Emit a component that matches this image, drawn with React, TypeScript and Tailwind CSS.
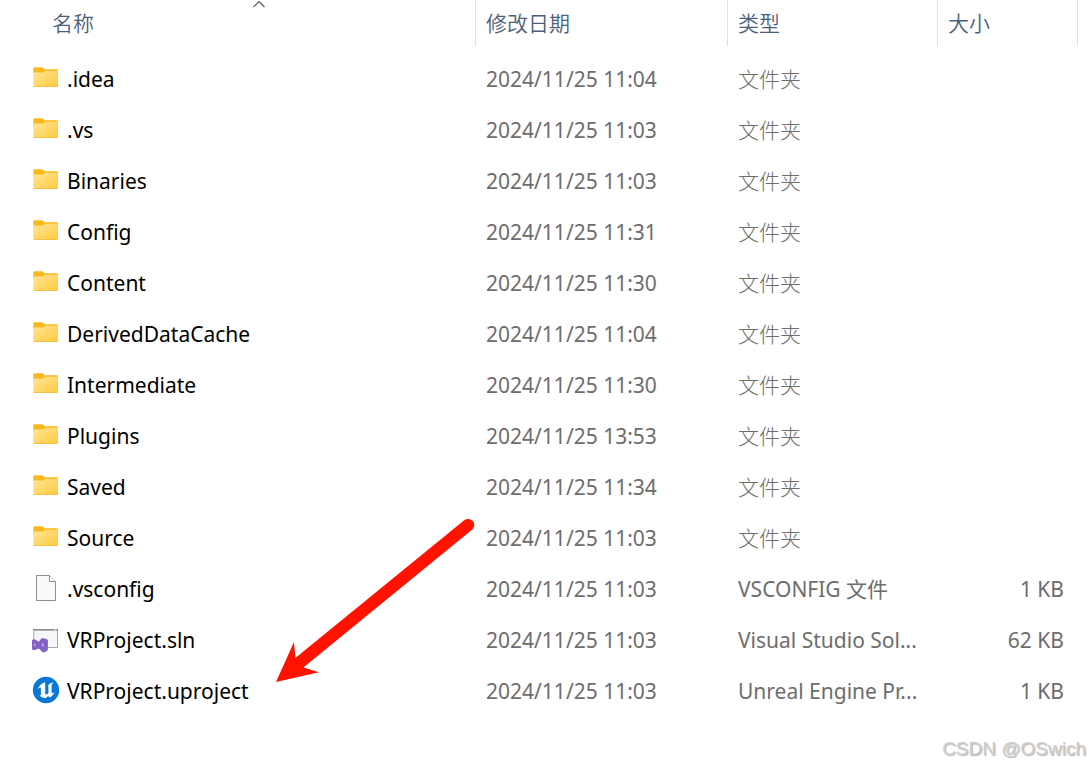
import type { ReactNode } from "react";

type Kind = "folder" | "file" | "solution" | "unreal";

interface Entry {
  name: string;
  modified: string;
  type: string;
  size?: string;
  kind: Kind;
}

const entries: Entry[] = [
  { name: ".idea", modified: "2024/11/25 11:04", type: "文件夹", kind: "folder" },
  { name: ".vs", modified: "2024/11/25 11:03", type: "文件夹", kind: "folder" },
  { name: "Binaries", modified: "2024/11/25 11:03", type: "文件夹", kind: "folder" },
  { name: "Config", modified: "2024/11/25 11:31", type: "文件夹", kind: "folder" },
  { name: "Content", modified: "2024/11/25 11:30", type: "文件夹", kind: "folder" },
  { name: "DerivedDataCache", modified: "2024/11/25 11:04", type: "文件夹", kind: "folder" },
  { name: "Intermediate", modified: "2024/11/25 11:30", type: "文件夹", kind: "folder" },
  { name: "Plugins", modified: "2024/11/25 13:53", type: "文件夹", kind: "folder" },
  { name: "Saved", modified: "2024/11/25 11:34", type: "文件夹", kind: "folder" },
  { name: "Source", modified: "2024/11/25 11:03", type: "文件夹", kind: "folder" },
  { name: ".vsconfig", modified: "2024/11/25 11:03", type: "VSCONFIG 文件", size: "1 KB", kind: "file" },
  { name: "VRProject.sln", modified: "2024/11/25 11:03", type: "Visual Studio Sol...", size: "62 KB", kind: "solution" },
  { name: "VRProject.uproject", modified: "2024/11/25 11:03", type: "Unreal Engine Pr...", size: "1 KB", kind: "unreal" },
];

function FolderIcon() {
  return (
    <svg viewBox="0 1 28 28" className="size-7 overflow-visible" aria-hidden="true">
      <defs>
        <linearGradient id="folder-front" x1="0" y1="0" x2="1" y2="1">
          <stop offset="0" stopColor="#ffe69b" />
          <stop offset="1" stopColor="#ffca3a" />
        </linearGradient>
      </defs>
      <path d="M1.3 4.8c0-.9.5-1.5 1.4-1.5h7.2c.6 0 1 .2 1.4.6l1.3 1.4h12c.8 0 1.4.4 1.4 1.2v5H1.3z" fill="#f9b91c" />
      <path d="M1.3 8.6h9.2c.6 0 1-.2 1.4-.6l1.3-1.3H26v15.1c0 .7-.4 1.1-1.1 1.1H2.4c-.7 0-1.1-.4-1.1-1.1z" fill="url(#folder-front)" />
      <path d="M1.8 22.5h23.7" stroke="#efbd3c" strokeWidth=".8" />
    </svg>
  );
}

function FileIcon() {
  return (
    <svg viewBox="0 1 28 28" className="size-7 overflow-visible" aria-hidden="true">
      <path d="M4.5 1.5h13l6 6v19h-19z" fill="#f9f9f9" stroke="#8e8e8e" />
      <path d="M17.5 1.5v6h6" fill="#fff" stroke="#8e8e8e" />
    </svg>
  );
}

function SolutionIcon() {
  return (
    <svg viewBox="0 1 28 28" className="size-7 overflow-visible" aria-hidden="true">
      <rect x="1.8" y="4.5" width="23.7" height="18" fill="#f6f6f6" stroke="#a5a9ad" />
      <path d="M1.3 4.8h24.7" stroke="#858b92" strokeWidth="1.6" />
      <path d="M22.2 4.8h1.5" stroke="#fff" strokeWidth="1" />
      <path
        d="M0 15.6C0 14.8 2.2 14 3 14.4L6.8 16.8 9.4 13.4C9.8 12.9 15.9 13.8 15.9 15.2V24.8C15.9 26 12 27.8 11 27.4L6.8 23.4 3 25C2.2 25.4 0 24.8 0 24z"
        fill="#8661c5"
      />
      <path d="M2.2 18.5 3.8 20 2.2 21.5zM9.4 20 11.4 18V22z" fill="#d9cdee" />
    </svg>
  );
}

function UnrealIcon() {
  return (
    <svg viewBox="0 1 28 28" className="size-7 overflow-visible" aria-hidden="true">
      <circle cx="14" cy="14" r="13.2" fill="#0878d7" />
      <path
        d="M13.2 6.2C9.4 7.2 6.7 9.9 5.7 13.5c.9-1.3 1.7-2 2.4-2 .5 0 .8.3.8.9v6.2c0 .6-.3.9-1.2.9 1.4 1.8 3.7 2.6 6.3 2.6l2-2 1.8 1.4c2.4-1.2 4.1-3.2 4.8-5.7-1 1.1-1.7 1.5-2.3 1.5-.5 0-.7-.3-.7-.8v-6c0-1.7.7-3 2-4.3-2.3.5-4.1 1.4-5.4 2.8h-.7c.6 0 .9.4.9 1.1v7c-.5.9-1.2 1.4-1.9 1.4-.9 0-1.3-.5-1.3-1.3V9c0-1.2-.1-1.9 0-2.8z"
        fill="#fff"
      />
    </svg>
  );
}

const icons: Record<Kind, ReactNode> = {
  folder: <FolderIcon />,
  file: <FileIcon />,
  solution: <SolutionIcon />,
  unreal: <UnrealIcon />,
};

function HeaderCell({ label, sorted = false }: { label: string; sorted?: boolean }) {
  return (
    <th scope="col" aria-sort={sorted ? "ascending" : undefined} className="relative border-r border-[#e2e2e2] p-0 font-[350]">
      <button type="button" className={sorted ? "block w-full pl-[52px] text-left" : "block w-full pl-[10px] text-left"}>
        {label}
      </button>
      {sorted && (
        <svg viewBox="0 0 14 8" className="absolute top-0 left-[252px] h-2 w-[14px]" aria-hidden="true">
          <path d="M1.5 7 7 1.5 12.5 7" fill="none" stroke="#555" strokeWidth="1.1" />
        </svg>
      )}
    </th>
  );
}

function PointerArrow() {
  return (
    <svg viewBox="0 0 200 166" className="pointer-events-none absolute top-[518px] left-[275px] h-[166px] w-[200px]" aria-hidden="true">
      <path d="M189.2 2.3A6 6 0 0 1 197 11.7L28.4 149.4 44 154.2 1 164 19 124 20.4 140z" fill="#ff1200" />
    </svg>
  );
}

export default function App() {
  return (
    <main className="relative min-h-screen bg-white font-['Noto_Sans','Noto_Sans_CJK_SC',sans-serif] text-[21px] leading-[30px] text-[#6d6d6d]">
      <table className="w-full table-fixed border-separate border-spacing-0 text-left whitespace-nowrap">
        <colgroup>
          <col />
          <col className="w-[252px]" />
          <col className="w-[210px]" />
          <col className="w-[140px]" />
          <col className="w-3" />
        </colgroup>
        <thead className="text-[#4c607a]">
          <tr className="h-[46px]">
            <HeaderCell label="名称" sorted />
            <HeaderCell label="修改日期" />
            <HeaderCell label="类型" />
            <HeaderCell label="大小" />
            <td />
          </tr>
        </thead>
        <tbody>
          <tr className="h-[7px]" aria-hidden="true">
            <td colSpan={5} className="p-0" />
          </tr>
          {entries.map((entry) => (
            <tr key={entry.name} className="h-[51px]">
              <td className="p-0 pl-8 text-black">
                <div className="flex items-center gap-[7px]">
                  {icons[entry.kind]}
                  <span>{entry.name}</span>
                </div>
              </td>
              <td className="p-0 pl-[10px]">{entry.modified}</td>
              <td className={entry.kind === "folder" ? "p-0 pl-[10px] font-light" : "p-0 pl-[10px]"}>{entry.type}</td>
              <td className="p-0 pr-[14px] text-right">{entry.size}</td>
              <td className="p-0" />
            </tr>
          ))}
        </tbody>
      </table>
      <PointerArrow />
      <p className="absolute right-1 bottom-1 font-['Liberation_Sans',sans-serif] text-[19px] leading-[26px] text-[#cecece] [text-shadow:1px_1px_1px_#b4b4b4]">
        CSDN @OSwich
      </p>
    </main>
  );
}
